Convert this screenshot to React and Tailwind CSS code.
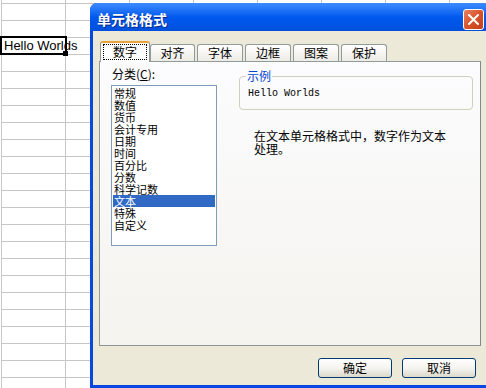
import React from "react";

const cjk = "font-['Noto_Sans_CJK_SC','Liberation_Sans',sans-serif]";
const categories = ["常规", "数值", "货币", "会计专用", "日期", "时间", "百分比", "分数", "科学记数", "文本", "特殊", "自定义"];
const tabs = ["对齐", "字体", "边框", "图案", "保护"];

function Sheet() {
  const rows = Array.from({ length: 24 });
  const cols = Array.from({ length: 8 });
  return (
    <div className="ml-px -mt-[13px] border-l border-[#c6c6c6] w-max">
      {rows.map((_, r) => (
        <div key={r} className="flex">
          {cols.map((_, c) => (
            <div key={c} className="w-[64px] h-[17px] border-r border-b border-[#c6c6c6] flex items-center">
              {r === 3 && c === 0 && (
                <span className="relative z-10 pl-[2px] whitespace-nowrap text-[13px] leading-[16px] font-['Liberation_Sans',sans-serif] text-black">
                  Hello Worlds
                </span>
              )}
            </div>
          ))}
        </div>
      ))}
    </div>
  );
}

function CloseButton() {
  return (
    <div className="w-[21px] h-[21px] rounded-[3px] border border-white bg-gradient-to-br from-[#e9805f] via-[#d9532c] to-[#c33d17] flex items-center justify-center">
      <svg width="11" height="11" viewBox="0 0 11 11">
        <path d="M1 1 L10 10 M10 1 L1 10" stroke="white" strokeWidth="2" strokeLinecap="square" />
      </svg>
    </div>
  );
}

function Dialog() {
  return (
    <div className={`absolute left-[90px] top-[3px] w-[400px] h-[385px] rounded-t-[7px] bg-[#0848e0] flex flex-col ${cjk}`}>
      {/* title bar */}
      <div className="h-[28px] pt-[4px] pl-[7px] pr-[6px] flex items-center justify-between rounded-t-[7px] bg-gradient-to-b from-[#3b8cff] via-[#0058ee] to-[#0050dc]">
        <span className="text-white font-bold text-[14px] leading-[16px] [text-shadow:1px_1px_0_#0a2a8a]">单元格格式</span>
        <CloseButton />
      </div>

      {/* body */}
      <div className="flex-1 mx-[3px] mb-[3px] bg-[#ece9d8] pt-[11px] px-[6px] text-[12px] leading-[12px] text-black">
        <div className="flex items-end h-[19px]">
          <div className="relative z-10 -mb-px ml-px w-[50px] h-[21px] bg-white border border-[#919b9c] border-b-0 border-t-[2px] border-t-[#e8a33a] rounded-t-[3px] pt-px px-[2px]">
            <div className="h-[16px] border border-dotted border-black flex items-center justify-center">数字</div>
          </div>
          <div className="flex items-end gap-[2px]">
            {tabs.map((t, i) => (
              <div
                key={t}
                className={`${i === 0 ? "w-[45px]" : "w-[46px]"} h-[17px] bg-gradient-to-b from-white to-[#ecebe5] border border-[#919b9c] border-b-0 rounded-t-[3px] flex items-center justify-center`}
              >
                {t}
              </div>
            ))}
          </div>
        </div>

        <div className="w-[382px] h-[285px] border border-[#919b9c] border-r-[#7f8a8b] border-b-[#8d9596] bg-gradient-to-b from-[#fcfcfe] to-[#f4f3ee] flex">
          <div className="pl-[11px] pt-[6px]">
            <div className="pl-px">
              分类(<u>C</u>):
            </div>
            <div className="mt-[5px] w-[106px] h-[161px] border border-[#7f9db9] bg-white p-px text-[11px]">
              {categories.map((c) => (
                <div key={c} className={`h-[12px] leading-[12px] pl-px ${c === "文本" ? "bg-[#316ac5] text-white" : ""}`}>
                  {c}
                </div>
              ))}
            </div>
          </div>

          <div className="ml-[22px] pt-[8px]">
            <fieldset className="w-[234px] h-[40px] border border-[#d0d0bf] rounded-[4px]">
              <legend className="ml-[6px] px-px text-[#0046d5] leading-[12px]">示例</legend>
              <div className="pt-[6px] pl-[8px] font-['Liberation_Mono',monospace] text-[10px] leading-[12px]">Hello Worlds</div>
            </fieldset>
            <p className="mt-[19px] ml-[15px] w-[200px] leading-[13px]">在文本单元格格式中，数字作为文本处理。</p>
          </div>
        </div>

        <div className="mt-[12px] flex justify-end gap-[10px] pr-[5px]">
          {["确定", "取消"].map((b) => (
            <button
              key={b}
              className="w-[74px] h-[20px] rounded-[3px] border border-[#003c74] bg-gradient-to-b from-white via-[#f5f4ef] to-[#dcd8cb] flex items-center justify-center text-[12px] leading-[12px]"
            >
              {b}
            </button>
          ))}
        </div>
      </div>
    </div>
  );
}

export default function App() {
  return (
    <div className="relative w-[486px] h-[388px] overflow-hidden bg-white">
      <Sheet />
      <div className="absolute left-0 top-[36px] w-[67px] h-[19px] border-2 border-black" />
      <div className="absolute left-[63px] top-[51px] w-[5px] h-[5px] bg-black" />
      <Dialog />
    </div>
  );
}
